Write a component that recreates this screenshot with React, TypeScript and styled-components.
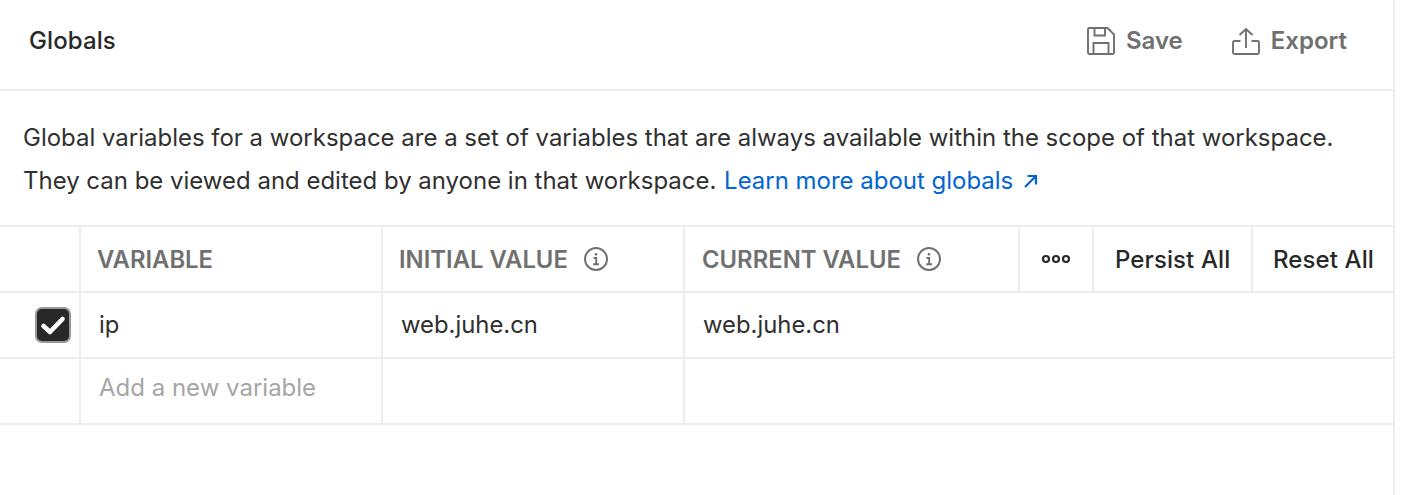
import React from "react";
import styled, { createGlobalStyle } from "styled-components";

const Global = createGlobalStyle`
  html, body { margin: 0; padding: 0; background: #fff; }
  body { font-family: Inter, "Liberation Sans", sans-serif; overflow: hidden; }
`;

const Panel = styled.div`
  width: 1395px;
  height: 495px;
  box-sizing: border-box;
  border-right: 2px solid #ededed;
  background: #fff;
`;

const Header = styled.header`
  height: 91px;
  box-sizing: border-box;
  border-bottom: 2px solid #ededed;
  display: flex;
  align-items: center;
  justify-content: space-between;
  padding: 0 46px 8px 29px;
`;

const Title = styled.h1`
  margin: 0;
  font-size: 24px;
  font-weight: 550;
  letter-spacing: 0.1px;
  color: #282828;
`;

const Actions = styled.div`
  display: flex;
  gap: 49px;
`;

const Action = styled.div`
  display: flex;
  align-items: center;
  gap: 11px;
  font-size: 24px;
  font-weight: 600;
  color: #707070;
`;

const Description = styled.p`
  margin: 0;
  height: 134px;
  box-sizing: border-box;
  padding: 25px 0 0 23px;
  font-size: 23.98px;
  line-height: 43px;
  color: #303030;
`;

const DocLink = styled.a`
  margin-left: 1px;
  color: #0265d2;
  text-decoration: none;
`;

const ExternalArrow = styled.svg`
  margin-left: 3px;
`;

const Row = styled.div<{ $height: number }>`
  display: grid;
  grid-template-columns: 81px 302px 302px 335px 74px 159px 1fr;
  height: ${(p) => p.$height}px;
  box-sizing: border-box;
  border-bottom: 2px solid #ededed;
`;

const BodyRow = styled(Row)`
  grid-template-columns: 81px 302px 302px 1fr;
`;

const Table = styled.div`
  border-top: 2px solid #ededed;
`;

const Cell = styled.div`
  display: flex;
  align-items: center;
  box-sizing: border-box;
  padding-left: 17px;
  border-right: 2px solid #ededed;
  font-size: 24px;
  color: #303030;
  white-space: nowrap;
  min-width: 0;
  &:last-child { border-right: none; }
`;

const HeadCell = styled(Cell)<{ $indent?: number }>`
  font-size: 23.85px;
  font-weight: 600;
  color: #707070;
  gap: 15px;
  padding-left: ${(p) => p.$indent ?? 16}px;
`;

const HeadButton = styled(Cell)<{ $indent: number }>`
  font-weight: 550;
  letter-spacing: 0.1px;
  color: #282828;
  padding-left: ${(p) => p.$indent}px;
`;

const DotsCell = styled(Cell)`
  padding-left: 0;
  justify-content: center;
`;

const CheckCell = styled(Cell)`
  padding: 0 0 0 35px;
`;

const Checkbox = styled.span`
  width: 36px;
  height: 36px;
  box-sizing: border-box;
  border: 2.5px solid #989898;
  border-radius: 7px;
  background: #282828;
  display: flex;
  align-items: center;
  justify-content: center;
`;

const ValueCell = styled(Cell)`
  padding: 0 0 2px 18px;
  font-size: 23.85px;
`;

const Placeholder = styled(ValueCell)`
  color: #a6a6a6;
  padding-bottom: 8px;
  font-size: 24px;
`;

const Info = () => (
  <svg width="26" height="26" viewBox="0 0 26 26" fill="none" stroke="#707070">
    <circle cx="13" cy="13" r="11" strokeWidth="2" />
    <circle cx="13" cy="8.2" r="1.3" fill="#707070" stroke="none" />
    <path d="M10.5 12H13.2V18M10.2 18.2H16" strokeWidth="1.9" />
  </svg>
);

export default function App() {
  return (
    <>
      <Global />
      <Panel>
        <Header>
          <Title>Globals</Title>
          <Actions>
            <Action>
              <svg width="28" height="28" viewBox="0 0 28 28" fill="none" stroke="#707070" strokeWidth="1.9">
                <path d="M2.5 1H20.5L27 7.5V25.5A1.5 1.5 0 0 1 25.5 27H2.5A1.5 1.5 0 0 1 1 25.5V2.5A1.5 1.5 0 0 1 2.5 1Z" />
                <path d="M7.5 1.5V8.5H18V1.5M6.5 27V16H21.5V27" />
              </svg>
              Save
            </Action>
            <Action>
              <svg width="28" height="28" viewBox="0 0 28 28" fill="none" stroke="#707070" strokeWidth="1.9">
                <path d="M8.5 14H2.5A1.5 1.5 0 0 0 1 15.5V25.5A1.5 1.5 0 0 0 2.5 27H25.5A1.5 1.5 0 0 0 27 25.5V15.5A1.5 1.5 0 0 0 25.5 14H19.5" />
                <path d="M14 21V2M7.5 8L14 2L20.5 8" />
              </svg>
              Export
            </Action>
          </Actions>
        </Header>
        <Description>
          Global variables for a workspace are a set of variables that are always available within the scope of that workspace.
          <br />
          They can be viewed and edited by anyone in that workspace.{" "}
          <DocLink href="#">
            Learn more about globals{" "}
            <ExternalArrow width="15" height="15" viewBox="0 0 15 15" fill="none" stroke="#0265d2" strokeWidth="2.2">
              <path d="M2 13L13 2M4.5 2H13V10.5" />
            </ExternalArrow>
          </DocLink>
        </Description>
        <Table>
          <Row $height={66}>
            <Cell />
            <HeadCell>VARIABLE</HeadCell>
            <HeadCell>INITIAL VALUE <Info /></HeadCell>
            <HeadCell $indent={17}>CURRENT VALUE <Info /></HeadCell>
            <DotsCell>
              <svg width="30" height="10" viewBox="0 0 30 10" fill="none" stroke="#282828" strokeWidth="2.2">
                <circle cx="5" cy="5" r="3" />
                <circle cx="15" cy="5" r="3" />
                <circle cx="25" cy="5" r="3" />
              </svg>
            </DotsCell>
            <HeadButton $indent={21}>Persist All</HeadButton>
            <HeadButton $indent={20}>Reset All</HeadButton>
          </Row>
          <BodyRow $height={66}>
            <CheckCell>
              <Checkbox>
                <svg width="26" height="22" viewBox="0 0 26 22" fill="none" stroke="#fff" strokeWidth="4.6" strokeLinecap="round" strokeLinejoin="round">
                  <path d="M3.5 12L10 18L22.5 5" />
                </svg>
              </Checkbox>
            </CheckCell>
            <ValueCell>ip</ValueCell>
            <ValueCell>web.juhe.cn</ValueCell>
            <ValueCell>web.juhe.cn</ValueCell>
          </BodyRow>
          <BodyRow $height={66}>
            <Cell />
            <Placeholder>Add a new variable</Placeholder>
            <ValueCell />
            <ValueCell />
          </BodyRow>
        </Table>
      </Panel>
    </>
  );
}
